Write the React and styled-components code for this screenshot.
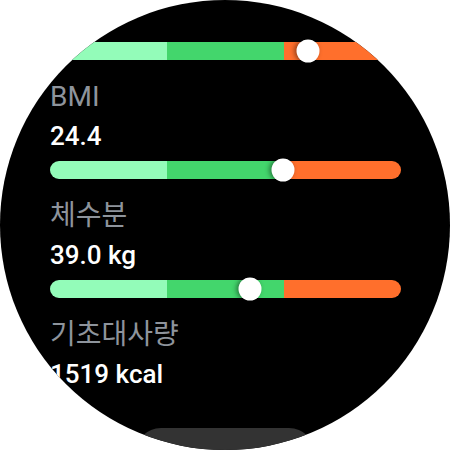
import styled, { createGlobalStyle } from "styled-components";

const GlobalStyle = createGlobalStyle`
  html, body {
    margin: 0;
    padding: 0;
    background: #ffffff;
  }
  body {
    font-family: Roboto, "Noto Sans CJK KR", sans-serif;
  }
`;

const metrics = [
  { label: "BMI", value: "24.4", pos: 0.663 },
  { label: "체수분", value: "39.0 kg", pos: 0.571 },
  { label: "기초대사량", value: "1519 kcal" },
];

function RangeBar({ pos }) {
  return (
    <Bar>
      <Track>
        <Segment color="#93fcb9" />
        <Segment color="#43d66c" />
        <Segment color="#ff6f2c" />
      </Track>
      <Thumb style={{ left: `${pos * 100}%` }} />
    </Bar>
  );
}

function App() {
  return (
    <>
      <GlobalStyle />
      <Watch>
        <List>
          <RangeBar pos={0.734} />
          {metrics.map((m) => (
            <Metric key={m.label}>
              <Label>{m.label}</Label>
              <Value>{m.value}</Value>
              {m.pos !== undefined && <RangeBar pos={m.pos} />}
            </Metric>
          ))}
        </List>
        <ActionButton aria-label="더보기" />
      </Watch>
    </>
  );
}

const Watch = styled.div`
  position: relative;
  width: 450px;
  height: 450px;
  border-radius: 50%;
  background: #000;
  overflow: hidden;
`;

const List = styled.div`
  display: flex;
  flex-direction: column;
  width: 351px;
  padding: 42px 0 0 50px;
`;

const Metric = styled.div`
  display: flex;
  flex-direction: column;
  margin-top: 19px;
`;

const Label = styled.div`
  color: #8e949c;
  font-size: 28px;
  line-height: 36px;
  font-weight: 400;
`;

const Value = styled.div`
  color: #fff;
  font-size: 26px;
  line-height: 34px;
  font-weight: 500;
  margin-top: 4px;
  margin-bottom: 8px;
`;

const Bar = styled.div`
  position: relative;
  height: 18px;
`;

const Track = styled.div`
  display: grid;
  grid-template-columns: 1fr 1fr 1fr;
  height: 100%;
  border-radius: 9px;
  overflow: hidden;
`;

const Segment = styled.div`
  background: ${(p) => p.color};
`;

const Thumb = styled.div`
  position: absolute;
  top: 50%;
  width: 23px;
  height: 23px;
  border-radius: 50%;
  background: #fff;
  transform: translate(-50%, -50%);
  box-shadow: -2px 0 5px rgba(0, 0, 0, 0.45);
`;

const ActionButton = styled.button`
  position: absolute;
  left: 50%;
  bottom: -30px;
  width: 180px;
  height: 52px;
  transform: translateX(-50%);
  border: none;
  border-radius: 26px;
  background: #333333;
`;

export default App;
